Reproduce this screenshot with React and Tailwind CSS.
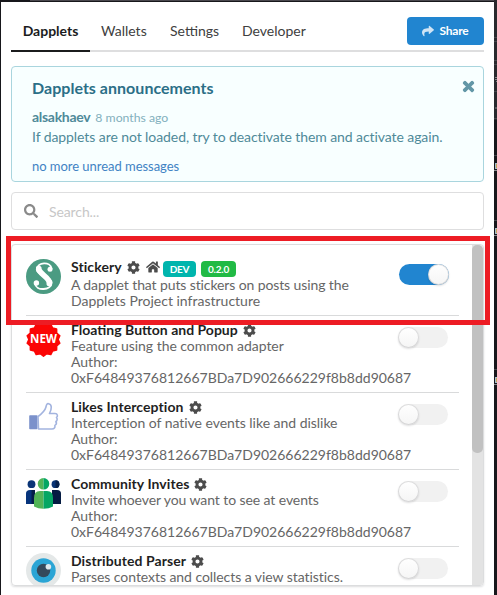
import React from "react";
import { FaShare, FaTimes, FaCog, FaHome, FaSearch } from "react-icons/fa";

const AUTHOR = "0xF64849376812667BDa7D902666229f8b8dd90687";

function StickeryIcon() {
  return (
    <svg viewBox="0 0 35 35" className="size-[35px]">
      <circle cx="17.5" cy="17.5" r="17.5" fill="#4b9b82" />
      <path d="M25.5 9.5C24.5 2.5 11.5 2.5 10.8 10.5C11 17 25.5 17 25.7 23.5C25.5 31.5 10 32.5 9 24.5" fill="none" stroke="#fff" strokeWidth="1.9" strokeLinecap="round" />
      <path d="M12.8 9.6C12.8 15.2 23.9 18 23.3 24.4" fill="none" stroke="#fff" strokeWidth="5.6" strokeLinecap="round" />
      <circle cx="24" cy="10.2" r="2.5" fill="#fff" />
      <circle cx="10.4" cy="24" r="2.7" fill="#fff" />
    </svg>
  );
}

const SEAL = Array.from({ length: 28 }, (_, i) => {
  const a = (i * Math.PI) / 14 - Math.PI / 2;
  const r = i % 2 ? 14.6 : 16.7;
  return `${(17.5 + r * Math.cos(a)).toFixed(2)},${(17.5 + r * Math.sin(a)).toFixed(2)}`;
}).join(" ");

function NewIcon() {
  return (
    <svg viewBox="0 0 35 35" className="size-[35px]">
      <polygon points={SEAL} fill="#fb0505" stroke="#fb0505" strokeWidth="1.6" strokeLinejoin="round" />
      <text x="17.5" y="20.6" textAnchor="middle" fontFamily="Open Sans, sans-serif" fontSize="11.5" fontWeight="700" fill="#fff" textLength="27" lengthAdjust="spacingAndGlyphs">NEW</text>
    </svg>
  );
}

function LikeIcon() {
  return (
    <svg viewBox="0 0 35 35" className="size-[35px]">
      <rect x="3.2" y="16.2" width="8.3" height="14" rx=".8" fill="#7b91cb" />
      <path d="M12 17.5C15.5 15 19 11.5 20 8C20.3 5.8 21 4.4 22.6 4.7C26 5.3 26 9.5 23.5 14.5H29C31.8 14.5 32 17.4 30.5 18.5C31.6 19.8 31.3 21.8 29.9 22.5C30.7 24 30.2 25.7 28.9 26.4C29.3 28.8 28.2 30 26 30H12.5Z" fill="#fff" stroke="#a3b4df" strokeWidth="1.6" strokeLinejoin="round" />
    </svg>
  );
}

function PeopleIcon() {
  return (
    <svg viewBox="0 0 35 35" className="size-[35px]">
      <g transform="translate(0 2)">
        <circle cx="5.5" cy="6.2" r="3.9" fill="#0a3476" />
        <circle cx="29.5" cy="6.2" r="3.9" fill="#0a3476" />
        <path d="M29.5 2.3a3.9 3.9 0 0 1 0 7.8Z" fill="#06204c" />
        <path d="M0 26V15.5Q0 12 4 12H8.5V26Z" fill="#07347c" />
        <path d="M5.5 12H9V26H5.5Z" fill="#051e49" />
        <path d="M26 12H31Q35 12 35 15.5V26H26Z" fill="#051b42" />
        <path d="M17.5 0a5.8 5.8 0 0 0 0 11.6Z" fill="#52b457" />
        <path d="M17.5 0a5.8 5.8 0 0 1 0 11.6Z" fill="#05a663" />
        <path d="M17.5 13H14Q8 13 8 20V28.5Q12 30.7 17.5 30.7Z" fill="#52b457" />
        <path d="M17.5 13H21Q27 13 27 20V28.5Q23 30.7 17.5 30.7Z" fill="#05a663" />
      </g>
    </svg>
  );
}

function EyeIcon() {
  return (
    <svg viewBox="0 0 35 35" className="size-[35px]">
      <circle cx="17.5" cy="17.5" r="17.5" fill="#e4e8e8" />
      <circle cx="17.5" cy="17.5" r="12.2" fill="#2ba5d5" />
      <circle cx="17.5" cy="17.5" r="6.7" fill="#34495b" />
      <circle cx="22.4" cy="13.7" r="2.8" fill="#dfe8ec" />
    </svg>
  );
}

const dapplets = [
  { name: "Floating Button and Popup", text: "Feature using the common adapter", author: AUTHOR, Icon: NewIcon, nameClass: "", textClass: "tracking-[-0.03px]" },
  { name: "Likes Interception", text: "Interception of native events like and dislike", author: AUTHOR, Icon: LikeIcon, nameClass: "tracking-[0.08px]", textClass: "tracking-[-0.03px]" },
  { name: "Community Invites", text: "Invite whoever you want to see at events", author: AUTHOR, Icon: PeopleIcon, nameClass: "tracking-[0.08px]", textClass: "tracking-[-0.09px]" },
  { name: "Distributed Parser", text: "Parses contexts and collects a view statistics.", Icon: EyeIcon, nameClass: "tracking-[0.08px]", textClass: "tracking-[-0.06px]" },
];

function Toggle({ on = false }) {
  return (
    <div className={on ? "flex h-[21px] w-[50px] shrink-0 justify-end rounded-full bg-[#2185d0]" : "flex h-[21px] w-[50px] shrink-0 rounded-full bg-[#f1f1f1]"}>
      <div className="size-[21px] rounded-full bg-linear-to-b from-white to-[#f5f5f5] shadow-[0_1px_2px_0_rgba(34,36,38,0.15),inset_0_0_0_1px_rgba(34,36,38,0.15)]" />
    </div>
  );
}

function Row({ name, text, author, Icon, nameClass, textClass }) {
  return (
    <div className="flex h-[77px] shrink-0 border-b border-[#d9dadb] pt-1.5">
      <div className="w-[45px] shrink-0"><Icon /></div>
      <div className="w-[327px] shrink-0 whitespace-nowrap leading-4 text-[#666]">
        <div className="flex h-4 items-center gap-[5px] font-bold text-[#1f1f1f]">
          <span className={nameClass}>{name}</span>
          <FaCog className="size-[13px] text-[#4c4c4c]" />
        </div>
        <div className={textClass}>{text}</div>
        {author && <div>Author:</div>}
        {author && <div>{author}</div>}
      </div>
      <div className="mt-[5px]"><Toggle /></div>
    </div>
  );
}

export default function App() {
  return (
    <div className="relative h-[595px] w-[497px] overflow-hidden bg-[#17171b] pt-[2px] pl-px font-[Lato,sans-serif] text-[14px]">
      <div className="h-[593px] w-[493px] bg-white pr-[10px] pl-[10px]">
        <nav className="flex h-[50px] justify-between border-b-2 border-[#dededf] text-[#404040]">
          <div className="flex h-[50px]">
            <div className="flex h-[50px] w-[79px] justify-center border-b-2 border-[#1b1c1d] pt-[19px] leading-5 font-bold text-[#1b1c1d]">Dapplets</div>
            <div className="w-[69px] pt-[19px] pl-[11px] leading-5">Wallets</div>
            <div className="w-[72px] pt-[19px] pl-[11px] leading-5">Settings</div>
            <div className="pt-[19px] pl-[11px] leading-5">Developer</div>
          </div>
          <button className="mt-[15px] flex h-[28px] w-[77px] items-center justify-center gap-[5px] rounded-[4px] bg-[#2185d0] text-[12px] font-bold tracking-[-0.2px] text-white">
            <FaShare className="size-3 text-[#d0e4f5]" />
            Share
          </button>
        </nav>

        <section className="mt-[14px] flex h-[116px] justify-between rounded-[4px] border border-[#a9d5de] bg-[#f8ffff] pr-[7px] pl-5 text-[#4f8a99]">
          <div className="whitespace-nowrap">
            <h1 className="mt-[11px] text-[16px] leading-5 font-bold tracking-[0.03px] text-[#2b6f87]">Dapplets announcements</h1>
            <div className="mt-[11px] flex h-4 gap-[5px] leading-4">
              <b className="tracking-[-0.3px]">alsakhaev</b>
              <span className="text-[12.25px] leading-[18px] text-[#83b0bd]">8 months ago</span>
            </div>
            <p className="mt-1 leading-4 tracking-[-0.08px]">If dapplets are not loaded, try to deactivate them and activate again.</p>
            <div className="mt-[13px] text-[13px] leading-4 tracking-[-0.04px] text-[#4183c4]">no more unread messages</div>
          </div>
          <FaTimes className="mt-[12px] size-[15px] shrink-0 stroke-[#6397a7] stroke-[36px] text-[#6397a7]" />
        </section>

        <div className="mt-[10px] flex h-[38px] items-center rounded-[4px] border border-[#dededf] pl-3 tracking-[-0.1px] text-[#c7c7c7]">
          <FaSearch className="mr-[11px] size-[14px] text-[#8a8a8a]" />
          Search...
        </div>

        <div className="mt-[14px] flex h-[342px] overflow-hidden rounded-[4px] border border-[#dcddde] shadow-[0_1px_2px_0_rgba(34,36,38,0.15)]">
          <div className="ml-[14px] flex w-[433px] shrink-0 flex-col overflow-hidden pt-[14px]">
            <div className="flex h-[57px] shrink-0 border-b border-[#d9dadb]">
              <div className="w-[45px] shrink-0"><StickeryIcon /></div>
              <div className="w-[328px] shrink-0 whitespace-nowrap leading-4 text-[#666]">
                <div className="flex h-[18px] items-center font-bold text-[#1f1f1f]">
                  <span className="-mt-[2px] w-[51px] tracking-[0.08px]">Stickery</span>
                  <FaCog className="-mt-[2px] ml-[5px] size-[13px] text-[#4c4c4c]" />
                  <FaHome className="-mt-[2px] mr-[3px] ml-[6px] size-[14px] text-[#4c4c4c]" />
                  <span className="mt-px flex h-4 w-[33px] items-center justify-center rounded-[4px] bg-[#00b5ad] text-[10px] tracking-[-0.2px] text-white">DEV</span>
                  <span className="mt-px ml-[5px] flex h-4 w-[35px] items-center justify-center rounded-[4px] bg-[#21ba45] text-[10px] tracking-[-0.2px] text-white">0.2.0</span>
                </div>
                <div className="tracking-[-0.11px]">A dapplet that puts stickers on posts using the</div>
                <div>Dapplets Project infrastructure</div>
              </div>
              <div className="mt-[5px]"><Toggle on /></div>
            </div>
            {dapplets.map((d) => <Row key={d.name} {...d} />)}
          </div>
          <div className="ml-auto w-[11px] shrink-0 bg-[#e3e3e3]">
            <div className="h-[208px] rounded-[5px] bg-[#c1c1c1]" />
          </div>
        </div>
      </div>
      <div className="absolute top-0 left-[30px] h-px w-[467px] bg-[#4a484e]" />
      <svg className="absolute top-0 right-0 h-[595px] w-[3px]" viewBox="0 0 3 595">
        <rect width="3" height="120" fill="#29292d" />
        <path d="M0 37.5H3M0 41.5H3M0 60.5H3M0 64.5H3M0 91.5H3M0 118.5H3M0 155.5H3M0 220.5H3M0 369.5H3" stroke="#45454a" />
        <path d="M0 170.5H3M0 235.5H3M0 384.5H3" stroke="#89898d" />
        <path d="M1 77.5H3M1 79.5H3M2 81.5H3M1 108H3" stroke="#85858a" />
        <path d="M2 163V169M2 228V234M2 377V383" stroke="#a5bdca" strokeWidth="2" />
        <path d="M2.5 164V168M2.5 229V233M2.5 378V382" stroke="#c5a258" />
      </svg>
      <div className="absolute top-[236px] left-[6px] h-[89px] w-[484px] border-[5px] border-[#ed1c24]" />
    </div>
  );
}
